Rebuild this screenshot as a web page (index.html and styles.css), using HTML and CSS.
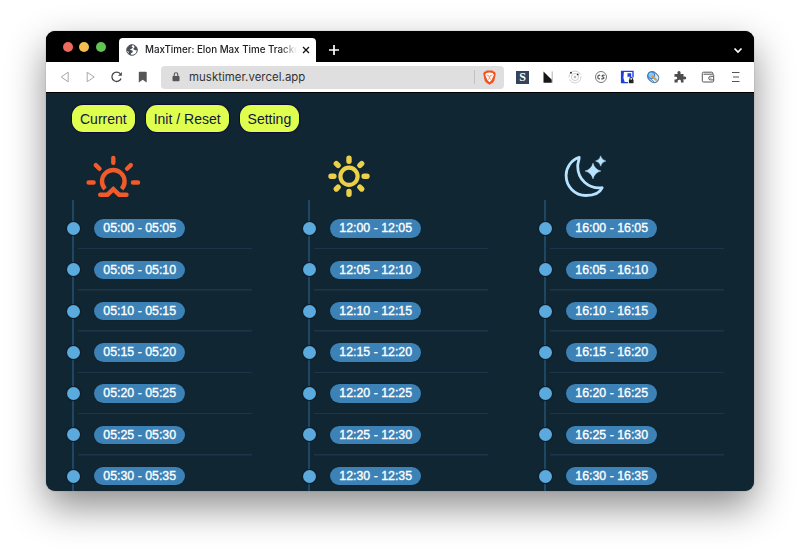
FILE: index.html
```html
<!DOCTYPE html>
<html lang="en">
<head>
<meta charset="utf-8">
<title>MaxTimer: Elon Max Time Tracker</title>
<link rel="stylesheet" href="styles.css">
</head>
<body>
<div class="window">
  <div class="tabbar">
    <div class="lights"><i class="red"></i><i class="amber"></i><i class="green"></i></div>
    <div class="tab">
      <svg width="12" height="12" viewBox="0 0 12 12"><circle cx="6" cy="6" r="5.3" fill="#fff" stroke="#4a4f57"/><path d="M1 4.6 3.2 1.4 6.5.8 5.6 2.5 7 3.6 5.2 5 3.5 5.4 6.3 6.6 7 8 5 9.2 4.7 11.2 1.8 9.5 3 8 .8 6.5ZM8 2 10 2.5 11.4 5.5 10.2 6.6 7.6 5.6 7.5 4.2 8.5 3.6Z" fill="#4a4f57"/></svg>
      <span class="tab-title">MaxTimer: Elon Max Time Tracke</span>
      <svg class="close" width="8" height="8" viewBox="0 0 8 8"><path d="M1 1 7 7M7 1 1 7" stroke="#111" stroke-width="1.3"/></svg>
    </div>
    <svg class="plus" width="10" height="10" viewBox="0 0 10 10"><path d="M5 0V10M0 5H10" stroke="#fff" stroke-width="1.7"/></svg>
    <svg class="chevron" width="10" height="7" viewBox="0 0 10 7"><path d="M1.5 1.5 5 5 8.5 1.5" fill="none" stroke="#fff" stroke-width="1.7"/></svg>
  </div>
  <div class="toolbar">
    <div class="nav">
      <svg width="14" height="14" viewBox="0 0 14 14"><path d="M10.2 2.2V11.8L3.2 7Z" fill="none" stroke="#a8a8a8" stroke-linejoin="round"/></svg>
      <svg width="14" height="14" viewBox="0 0 14 14"><path d="M3.2 2.2V11.8L10.2 7Z" fill="none" stroke="#a8a8a8" stroke-linejoin="round"/></svg>
      <svg width="14" height="14" viewBox="0 0 14 14"><path d="M10.2 3.7A4.7 4.7 0 1 0 11 8.5" fill="none" stroke="#444" stroke-width="1.3"/><path d="M8 5.7H11.8V1.9Z" fill="#444"/></svg>
      <svg width="14" height="14" viewBox="0 0 14 14"><path d="M2.8 2.5Q2.8 1.8 3.5 1.8H9.9Q10.7 1.8 10.7 2.5V12.4L6.7 9.8 2.8 12.4Z" fill="#555"/></svg>
    </div>
    <div class="address">
      <svg width="8" height="10" viewBox="0 0 8 10"><path d="M2.2 4.5V2.6A1.8 1.8 0 0 1 5.8 2.6V4.5" fill="none" stroke="#55565a" stroke-width="1.1"/><rect x=".5" y="4" width="7" height="5.2" rx=".8" fill="#55565a"/></svg>
      <span class="url">musktimer.vercel.app</span>
      <svg class="shield" width="13" height="15" viewBox="0 0 13 15"><path d="M3.5.4H9.5L10.8 1.7 12 1.8 12.7 4 11.4 10.5 10 12.5 6.5 14.8 3 12.5 1.6 10.5.3 4 1 1.8 2.2 1.7Z" fill="#f4511e"/><path d="M3.3 3 6.5 2.5 9.7 3 10.9 4.9 9.8 7.2 8.8 9.8 6.5 12.2 4.2 9.8 3.2 7.2 2.1 4.9Z" fill="#fff"/><path d="M3.5 5.2 5.5 5.5 5.2 6.8M9.5 5.2 7.5 5.5 7.8 6.8M6.5 6V8.4M4.9 9.5 6.5 8.5 8.1 9.5" fill="none" stroke="#f4511e" stroke-width=".6"/></svg>
    </div>
    <div class="extensions">
      <div class="ext-s">S</div>
      <svg width="14" height="14" viewBox="0 0 14 14"><path d="M2.5 1.5 10.8 9.8V12.8H2.5Z" fill="#171717"/><path d="M11.2 1.5V12.8" stroke="#999" stroke-width=".8"/></svg>
      <svg width="14" height="14" viewBox="0 0 14 14"><g fill="none" stroke="#d0d0d0"><circle cx="7" cy="7" r="6" stroke-dasharray="16 2"/><circle cx="7" cy="7" r="3.6"/></g><circle cx="7" cy="7" r="1.3" fill="#bbb"/><circle cx="3" cy="2.8" r="1" fill="#333"/><circle cx="9.7" cy="4.4" r=".9" fill="#333"/></svg>
      <svg width="14" height="14" viewBox="0 0 14 14"><circle cx="7" cy="7" r="5.5" fill="none" stroke="#777"/><path d="M6.2 5.4C3.4 4 2.5 9.6 6 8.8M10.6 5.4C8.2 4.5 7.2 6.5 9 7S9.8 9.5 7.2 8.7" fill="none" stroke="#555" stroke-width="1.1"/></svg>
      <svg width="14" height="14" viewBox="0 0 14 14"><path d="M8 12.6H1.6V1.4H13V7.5" fill="none" stroke="#1d3fdc" stroke-width="1.4"/><path d="M1 1H4L3.4 8 5 13H1ZM7.5 3.2H11.2V7.5H9.3V6L7.5 7.5Z" fill="#1d3fdc"/><rect x="8.9" y="9.6" width="4.6" height="3.6" fill="#222"/><path d="M9.9 10V8.8A1.3 1.3 0 0 1 12.5 8.8V10" fill="none" stroke="#222"/></svg>
      <svg width="14" height="14" viewBox="0 0 14 14"><g transform="rotate(42 7 7)"><rect x="1.3" y="2.4" width="11.8" height="9.2" rx="4.6" fill="#dce8ee" stroke="#4277b4" stroke-width="1.1"/><path d="M4 10H11" stroke="#4277b4" stroke-width=".8"/></g><circle cx="5.3" cy="5.2" r="3.4" fill="#8ec5f4" stroke="#3478c7"/><path d="M6.3 6.3 10 9.8" stroke="#e39a28" stroke-width="2" stroke-linecap="round"/></svg>
      <svg width="14" height="14" viewBox="0 0 14 14"><path d="M1.5 4H4.7C3.8 1.9 5 1.1 6 1.1S8.2 1.9 7.4 4H10.5V6.8C12.5 6 13.2 7 13.2 8S12.4 10 10.5 9.1V12.4H7.9C8.3 10.3 7.3 9.8 6.3 9.8S4.3 10.4 4.7 12.4H1.5V9.4C3.7 9.8 4.2 9 4.2 8.1S3.5 6.4 1.5 6.9Z" fill="#4d4d4d"/></svg>
      <svg class="wallet" width="14" height="14" viewBox="0 0 14 14"><path d="M11.8 4.2V3.2Q11.8 2.2 10.8 2.2H2.5Q1.3 2.2 1.3 3.4V10.8Q1.3 12 2.5 12H11.6Q12.7 12 12.7 10.8V5.4Q12.7 4.2 11.6 4.2H2.5M12.7 6.3H9.5A1.8 1.8 0 0 0 9.5 9.9H12.7" fill="none" stroke="#555"/><circle cx="9.8" cy="8.1" r=".6" fill="#555"/></svg>
      <svg class="menu" width="14" height="14" viewBox="0 0 14 14"><path d="M3 2.5H10.5M4 7H10M3 11.5H10.5" stroke="#555" stroke-width="1.1"/></svg>
    </div>
  </div>
  <main class="page">
    <div class="actions"><button>Current</button><button>Init / Reset</button><button>Setting</button></div>
    <div class="columns">
      <section>
        <svg class="period" width="80" height="48" viewBox="72 152 80 48"><g fill="none" stroke="#f15a29" stroke-width="4.4" stroke-linecap="round" stroke-linejoin="round"><path d="M113.3 158V162.8M88.6 182.5H93.6M133 182.5H138M95.8 165.1 99.5 168.8M130.8 165.1 127.1 168.8"/><path d="M105 189A11.3 11.3 0 1 1 121.6 189" stroke-linecap="butt"/><path d="M100.2 194.7H107.5L113.3 189.1 119.1 194.7H126.5" stroke-linejoin="miter"/></g></svg>
        <ol>
          <li><time>05:00 - 05:05</time></li>
          <li><time>05:05 - 05:10</time></li>
          <li><time>05:10 - 05:15</time></li>
          <li><time>05:15 - 05:20</time></li>
          <li><time>05:20 - 05:25</time></li>
          <li><time>05:25 - 05:30</time></li>
          <li><time>05:30 - 05:35</time></li>
        </ol>
      </section>
      <section>
        <svg class="period" width="80" height="48" viewBox="308 152 80 48"><g fill="none" stroke="#ecd048" stroke-linecap="round"><circle cx="349" cy="176.3" r="8.6" stroke-width="4.2"/><path stroke-width="5.4" d="M349 158.3V161.2M349 191.4V194.3M331 176.3H333.9M364.1 176.3H367M336.3 163.6 338.1 165.4M359.9 187.2 361.7 189M336.3 189 338.1 187.2M359.9 165.4 361.7 163.6"/></g></svg>
        <ol>
          <li><time>12:00 - 12:05</time></li>
          <li><time>12:05 - 12:10</time></li>
          <li><time>12:10 - 12:15</time></li>
          <li><time>12:15 - 12:20</time></li>
          <li><time>12:20 - 12:25</time></li>
          <li><time>12:25 - 12:30</time></li>
          <li><time>12:30 - 12:35</time></li>
        </ol>
      </section>
      <section>
        <svg class="period" width="80" height="48" viewBox="544 152 80 48"><path d="M579.2 157.3C571 160.2 566.1 167.5 566.1 175.3 566.1 186.8 575 195.5 585.8 195.5 593.5 195.5 600 192.6 602.2 187.7 588.5 189.3 577.7 179.5 577.7 166 577.7 163 579.2 160.3 579.2 157.3Z" fill="none" stroke="#b8e3ff" stroke-width="2.8" stroke-linejoin="round"/><path d="M593 163Q594.6 169.4 601 171 594.6 172.6 593 179 591.4 172.6 585 171 591.4 169.4 593 163ZM600.7 155.8Q601.7 160 605.9 161 601.7 162 600.7 166.2 599.7 162 595.5 161 599.7 160 600.7 155.8Z" fill="#b8e3ff" stroke="#b8e3ff" stroke-width=".4"/></svg>
        <ol>
          <li><time>16:00 - 16:05</time></li>
          <li><time>16:05 - 16:10</time></li>
          <li><time>16:10 - 16:15</time></li>
          <li><time>16:15 - 16:20</time></li>
          <li><time>16:20 - 16:25</time></li>
          <li><time>16:25 - 16:30</time></li>
          <li><time>16:30 - 16:35</time></li>
        </ol>
      </section>
    </div>
  </main>
</div>
</body>
</html>
```
FILE: styles.css
```css
* { box-sizing: border-box; }
body { margin: 0; height: 552px; overflow: hidden; background: #fff; font-family: "Liberation Sans", Arial, sans-serif; }
body::before { content: ""; display: table; }
svg { display: block; flex: none; }
.window {
  width: 708px; height: 460px; margin: 31px 46px 0; overflow: hidden;
  border-radius: 9px; background: #112633;
  box-shadow: 0 0 1px rgba(0,0,0,.5), 0 16px 38px rgba(0,0,0,.45);
}
.tabbar { height: 31px; background: #000; display: flex; align-items: center; padding-left: 17px; }
.lights { display: flex; gap: 6.4px; width: 56px; }
.lights i { width: 10px; height: 10px; border-radius: 50%; }
.red { background: #ee6a5f; }
.amber { background: #f5bd4f; }
.green { background: #61c454; }
.tab { align-self: flex-end; width: 197px; height: 24.5px; background: #fff; border-radius: 4px 4px 0 0; display: flex; align-items: center; padding: 0 6px 0 7px; }
.tab-title {
  margin-left: 7px; width: 152px; white-space: nowrap;
  font: 500 9.8px Inter, sans-serif; letter-spacing: -.02px; color: #202124;
  -webkit-mask-image: linear-gradient(90deg, #000 89%, transparent);
  mask-image: linear-gradient(90deg, #000 89%, transparent);
}
.close { margin-left: auto; }
.plus { margin: 6px 0 0 13px; }
.chevron { margin: 7px 11px 0 auto; }
.toolbar { height: 31px; background: #fff; border-bottom: 1px solid #000; display: flex; align-items: center; padding-left: 12px; }
.nav { display: flex; gap: 12px; width: 103px; }
.address { width: 343px; height: 23px; border-radius: 4px; background: #dfdfdf; display: flex; align-items: center; padding: 0 8px 0 11px; }
.address::after { content: ""; order: 1; width: 1px; height: 14px; background: #c2c2c2; margin: 0 8px 0 auto; }
.url { margin-left: 9px; font: 400 11.4px Inter, sans-serif; color: #333; letter-spacing: .05px; }
.shield { order: 2; }
.extensions { flex: 1; display: flex; gap: 12.3px; padding-left: 12px; align-items: center; }
.ext-s { width: 13px; height: 13px; background: #34445a; color: #fff; font: bold 12px/13px "Liberation Serif", serif; text-align: center; }
.wallet { margin-left: 2px; }
.menu { margin-left: 2px; }
.page { padding: 12px 26px 0; }
.actions { display: flex; gap: 11px; height: 47px; align-items: flex-start; }
.actions button { height: 27px; padding: 0 8px; border: 0; border-radius: 11px; background: #dfff4f; color: #13143a; font: 14px "Liberation Sans", Arial, sans-serif; box-shadow: 0 0 1px 1px #100c38; }
.columns { display: grid; grid-template-columns: repeat(3, 236px); width: 708px; }
ol { list-style: none; margin: 0; padding: 8px 0 0; height: 300px; border-left: 2px solid #1f4763; }
li { display: flex; align-items: center; height: 41.25px; width: 180px; background: linear-gradient(#1b364a, #1b364a) 4px 100% / 174px 1.5px no-repeat; }
li::before { content: ""; width: 13px; height: 13px; border-radius: 50%; background: #5baadd; margin-left: -7.3px; flex: none; box-shadow: 0 0 1px 1px #0c1c2a; }
time { margin-left: 14.5px; width: 91px; height: 18.5px; line-height: 19px; border-radius: 10px; background: #3c82b6; color: #fff; text-align: center; font-size: 12.35px; -webkit-text-stroke: .35px #fff; box-shadow: 0 0 1px #071520; }
```
